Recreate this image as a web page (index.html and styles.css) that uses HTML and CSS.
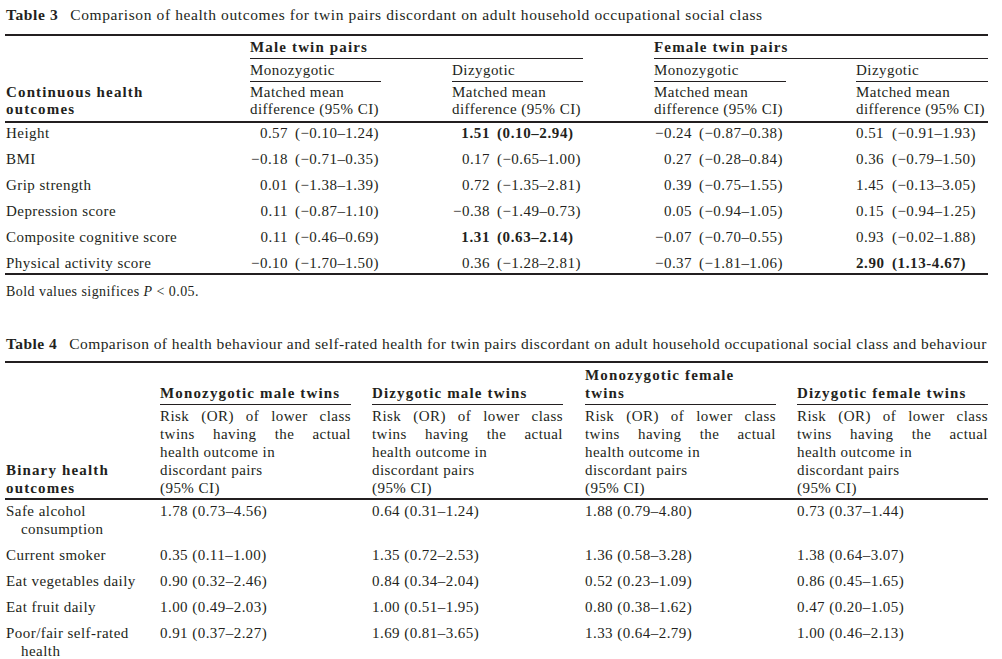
FILE: index.html
```html
<!DOCTYPE html>
<html lang="en">
<head>
<meta charset="utf-8">
<title>Tables 3 and 4</title>
<link rel="stylesheet" href="styles.css">
</head>
<body>
<section class="tbl-block t3-block">
  <p class="caption"><b>Table 3</b><span class="cap-text">Comparison of health outcomes for twin pairs discordant on adult household occupational social class</span></p>
  <table class="t3">
    <colgroup>
      <col class="t3-label"><col class="t3-c1"><col class="t3-c2"><col class="t3-c3"><col class="t3-c4">
    </colgroup>
    <thead>
      <tr class="h-grp">
        <th class="lab"></th>
        <th colspan="2" class="pad-r71"><div class="ul hb">Male twin pairs</div></th>
        <th colspan="2"><div class="ul hb">Female twin pairs</div></th>
      </tr>
      <tr class="h-sub">
        <th class="lab"></th>
        <th class="pad-r71"><div class="ul">Monozygotic</div></th>
        <th class="pad-r71"><div class="ul">Dizygotic</div></th>
        <th class="pad-r70"><div class="ul">Monozygotic</div></th>
        <th><div class="ul">Dizygotic</div></th>
      </tr>
      <tr class="h-desc">
        <th class="lab hb">Continuous health<br>outcomes</th>
        <th class="pad-r71">Matched mean<br>difference (95% CI)</th>
        <th class="pad-r71">Matched mean<br>difference (95% CI)</th>
        <th class="pad-r70">Matched mean<br>difference (95% CI)</th>
        <th>Matched mean<br>difference (95% CI)</th>
      </tr>
    </thead>
    <tbody>
      <tr><td class="lab">Height</td>
        <td class="pad-r71"><span class="est">0.57</span><span class="ci">(−0.10–1.24)</span></td>
        <td class="pad-r71 vb"><span class="est">1.51</span><span class="ci">(0.10–2.94)</span></td>
        <td class="pad-r70"><span class="est">−0.24</span><span class="ci">(−0.87–0.38)</span></td>
        <td class="last"><span class="est">0.51</span><span class="ci">(−0.91–1.93)</span></td></tr>
      <tr><td class="lab">BMI</td>
        <td class="pad-r71"><span class="est">−0.18</span><span class="ci">(−0.71–0.35)</span></td>
        <td class="pad-r71"><span class="est">0.17</span><span class="ci">(−0.65–1.00)</span></td>
        <td class="pad-r70"><span class="est">0.27</span><span class="ci">(−0.28–0.84)</span></td>
        <td class="last"><span class="est">0.36</span><span class="ci">(−0.79–1.50)</span></td></tr>
      <tr><td class="lab">Grip strength</td>
        <td class="pad-r71"><span class="est">0.01</span><span class="ci">(−1.38–1.39)</span></td>
        <td class="pad-r71"><span class="est">0.72</span><span class="ci">(−1.35–2.81)</span></td>
        <td class="pad-r70"><span class="est">0.39</span><span class="ci">(−0.75–1.55)</span></td>
        <td class="last"><span class="est">1.45</span><span class="ci">(−0.13–3.05)</span></td></tr>
      <tr><td class="lab">Depression score</td>
        <td class="pad-r71"><span class="est">0.11</span><span class="ci">(−0.87–1.10)</span></td>
        <td class="pad-r71"><span class="est">−0.38</span><span class="ci">(−1.49–0.73)</span></td>
        <td class="pad-r70"><span class="est">0.05</span><span class="ci">(−0.94–1.05)</span></td>
        <td class="last"><span class="est">0.15</span><span class="ci">(−0.94–1.25)</span></td></tr>
      <tr><td class="lab">Composite cognitive score</td>
        <td class="pad-r71"><span class="est">0.11</span><span class="ci">(−0.46–0.69)</span></td>
        <td class="pad-r71 vb"><span class="est">1.31</span><span class="ci">(0.63–2.14)</span></td>
        <td class="pad-r70"><span class="est">−0.07</span><span class="ci">(−0.70–0.55)</span></td>
        <td class="last"><span class="est">0.93</span><span class="ci">(−0.02–1.88)</span></td></tr>
      <tr><td class="lab">Physical activity score</td>
        <td class="pad-r71"><span class="est">−0.10</span><span class="ci">(−1.70–1.50)</span></td>
        <td class="pad-r71"><span class="est">0.36</span><span class="ci">(−1.28–2.81)</span></td>
        <td class="pad-r70"><span class="est">−0.37</span><span class="ci">(−1.81–1.06)</span></td>
        <td class="last vb"><span class="est">2.90</span><span class="ci">(1.13-4.67)</span></td></tr>
    </tbody>
  </table>
  <p class="foot">Bold values significes <i>P</i> &lt; 0.05.</p>
</section>

<section class="tbl-block t4-block">
  <p class="caption"><b>Table 4</b><span class="cap-text">Comparison of health behaviour and self-rated health for twin pairs discordant on adult household occupational social class and behaviour</span></p>
  <table class="t4">
    <colgroup>
      <col class="t4-label"><col class="t4-c1"><col class="t4-c2"><col class="t4-c3"><col class="t4-c4">
    </colgroup>
    <thead>
      <tr class="h-grp">
        <th class="lab hb" rowspan="2">Binary health<br>outcomes</th>
        <th class="pad-r21"><div class="ul hb">Monozygotic male twins</div></th>
        <th class="pad-r22"><div class="ul hb">Dizygotic male twins</div></th>
        <th class="pad-r21"><div class="ul hb">Monozygotic female<br>twins</div></th>
        <th><div class="ul hb">Dizygotic female twins</div></th>
      </tr>
      <tr class="h-desc">
        <th class="pad-r21"><span class="just">Risk (OR) of lower class</span><span class="just">twins having the actual</span>health outcome in<br>discordant pairs<br>(95% CI)</th>
        <th class="pad-r22"><span class="just">Risk (OR) of lower class</span><span class="just">twins having the actual</span>health outcome in<br>discordant pairs<br>(95% CI)</th>
        <th class="pad-r21"><span class="just">Risk (OR) of lower class</span><span class="just">twins having the actual</span>health outcome in<br>discordant pairs<br>(95% CI)</th>
        <th><span class="just">Risk (OR) of lower class</span><span class="just">twins having the actual</span>health outcome in<br>discordant pairs<br>(95% CI)</th>
      </tr>
    </thead>
    <tbody>
      <tr><td class="lab">Safe alcohol<br>consumption</td><td class="pad-r21">1.78 (0.73–4.56)</td><td class="pad-r22">0.64 (0.31–1.24)</td><td class="pad-r21">1.88 (0.79–4.80)</td><td>0.73 (0.37–1.44)</td></tr>
      <tr><td class="lab">Current smoker</td><td class="pad-r21">0.35 (0.11–1.00)</td><td class="pad-r22">1.35 (0.72–2.53)</td><td class="pad-r21">1.36 (0.58–3.28)</td><td>1.38 (0.64–3.07)</td></tr>
      <tr><td class="lab">Eat vegetables daily</td><td class="pad-r21">0.90 (0.32–2.46)</td><td class="pad-r22">0.84 (0.34–2.04)</td><td class="pad-r21">0.52 (0.23–1.09)</td><td>0.86 (0.45–1.65)</td></tr>
      <tr><td class="lab">Eat fruit daily</td><td class="pad-r21">1.00 (0.49–2.03)</td><td class="pad-r22">1.00 (0.51–1.95)</td><td class="pad-r21">0.80 (0.38–1.62)</td><td>0.47 (0.20–1.05)</td></tr>
      <tr><td class="lab">Poor/fair self-rated<br>health</td><td class="pad-r21">0.91 (0.37–2.27)</td><td class="pad-r22">1.69 (0.81–3.65)</td><td class="pad-r21">1.33 (0.64–2.79)</td><td>1.00 (0.46–2.13)</td></tr>
    </tbody>
  </table>
</section>
</body>
</html>
```

FILE: styles.css
```css
* { box-sizing: border-box; }

html, body {
  margin: 0;
  padding: 0;
  background: #ffffff;
}

body {
  padding: 0 14px 0 5px;
  color: #231f20;
  font-family: "Liberation Serif", "Times New Roman", serif;
  font-size: 15px;
  letter-spacing: 0.45px;
  overflow: hidden;
  height: 659px;
}

.hb { font-weight: 700; letter-spacing: 1.15px; }
.vb { font-weight: 700; letter-spacing: 0.6px; }

.caption {
  margin: 0;
  padding: 6px 0 0 1px;
  font-size: 15.5px;
  line-height: 18px;
  letter-spacing: 0.6px;
  white-space: nowrap;
}
.caption b { font-weight: 700; }
.cap-text { margin-left: 12px; }

table {
  border-collapse: collapse;
  table-layout: fixed;
  width: 983px;
}

th, td {
  padding: 0;
  font-weight: 400;
  text-align: left;
  vertical-align: top;
}

.pad-r71 { padding-right: 71px; }
.pad-r70 { padding-right: 70px; }
.pad-r21 { padding-right: 21px; }
.pad-r22 { padding-right: 22px; }

.lab { padding-left: 1px; }

.ul { border-bottom: 1px solid #231f20; }

/* ---------- Table 3 ---------- */
.t3-block .caption { height: 34px; }

.t3 { border-top: 2px solid #231f20; }
.t3-label { width: 245px; }
.t3-c1, .t3-c2, .t3-c3 { width: 202px; }
.t3-c4 { width: 132px; }

.t3 .h-grp th { line-height: 18px; padding-top: 2px; }
.t3 .h-grp .ul { padding-bottom: 2px; }
.t3 .h-sub th { line-height: 18px; padding-top: 2px; }
.t3 .h-sub .ul { padding-bottom: 2px; }
.t3 .h-desc th {
  line-height: 17px;
  padding-top: 2px;
  padding-bottom: 3px;
  vertical-align: bottom;
  border-bottom: 2px solid #231f20;
}

.t3 tbody td { line-height: 18px; padding-top: 4px; padding-bottom: 4px; white-space: nowrap; }
.t3 tbody tr:first-child td { padding-top: 1px; }
.t3 tbody tr:last-child td { padding-bottom: 1px; border-bottom: 2px solid #231f20; }

.est {
  display: inline-block;
  width: 38px;
  margin-right: 7px;
  text-align: right;
}
.last .est { width: 28px; margin-right: 8px; }

.foot {
  margin: 0;
  padding: 8px 0 0 1px;
  font-size: 14px;
  line-height: 18px;
  letter-spacing: 0.45px;
}

/* ---------- Table 4 ---------- */
.t4-block { padding-top: 33px; }
.t4-block .caption {
  padding-top: 0;
  height: 27px;
  line-height: 20px;
  letter-spacing: 0.44px;
}

.t4 { border-top: 2px solid #231f20; }
.t4-label { width: 155px; }
.t4-c1 { width: 212px; }
.t4-c2 { width: 213px; }
.t4-c3 { width: 212px; }
.t4-c4 { width: 191px; }

.t4 .h-grp th {
  vertical-align: bottom;
  line-height: 18px;
  padding-top: 3px;
}
.t4 .h-grp .ul { padding-bottom: 2px; }
.t4 th.lab {
  vertical-align: bottom;
  line-height: 18px;
  padding-bottom: 1px;
  border-bottom: 2px solid #231f20;
}
.t4 .h-desc th {
  line-height: 18px;
  padding-top: 2px;
  padding-bottom: 1px;
  border-bottom: 2px solid #231f20;
}
.just {
  display: block;
  text-align: justify;
  text-align-last: justify;
}

.t4 tbody td { line-height: 18px; padding-top: 4px; padding-bottom: 4px; white-space: nowrap; }
.t4 tbody tr:first-child td { padding-top: 2px; }
.t4 td.lab { padding-left: 16px; text-indent: -15px; white-space: normal; }
```
